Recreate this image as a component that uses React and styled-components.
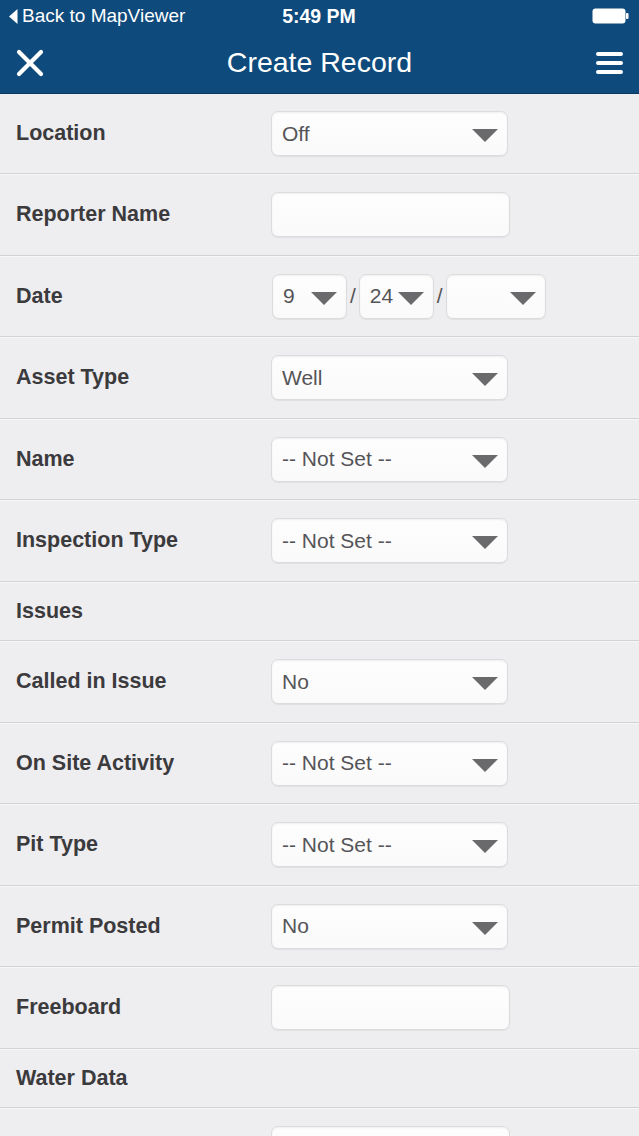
import styled, { createGlobalStyle } from 'styled-components'

const GlobalStyle = createGlobalStyle`
  html, body {
    margin: 0;
    padding: 0;
    background: #eeedef;
    font-family: "Liberation Sans", Arial, sans-serif;
  }
`

const Screen = styled.div`
  width: 639px;
  height: 1136px;
  overflow: hidden;
  background: #eeedef;
`

const Header = styled.header`
  background: #0e4a7b;
  color: #fff;
  height: 93px;
  border-bottom: 1px solid #0a3a62;
`

const StatusBar = styled.div`
  height: 32px;
  display: grid;
  grid-template-columns: 1fr auto 1fr;
  align-items: center;
  padding: 0 10px 0 9px;
  font-size: 19px;

  .back{
    display: flex;
    align-items: center;
    gap: 4px;
  }

  .time{
    font-weight: 700;
    font-size: 19.5px;
  }

  .battery{
    justify-self: end;
    display: flex;
    align-items: center;
  }
`

const NavBar = styled.div`
  height: 61px;
  display: grid;
  grid-template-columns: 1fr auto 1fr;
  align-items: center;
  padding: 0 16px 0 16px;

  .title{
    font-size: 28.5px;
    font-weight: 400;
  }

  .right{
    justify-self: end;
    display: flex;
  }
`

const Row = styled.div`
  height: ${props => props.$section ? '57.5px' : '79.5px'};
  display: flex;
  align-items: center;
  padding-left: 16px;
  border-bottom: 1px solid #d2d1d4;
  border-top: 1px solid #f7f7f8;

  &:first-of-type{
    height: 79px;
    border-top: none;
  }
`

const Label = styled.div`
  width: 255px;
  font-size: 21.5px;
  font-weight: 700;
  color: #3b3a3d;
`

const Box = styled.div`
  box-sizing: border-box;
  width: ${props => props.$width}px;
  height: 45px;
  background: linear-gradient(#fdfdfd, #fafafa);
  border: 1px solid #dcdbdd;
  border-radius: 7px;
  box-shadow: 0 1px 1px rgba(0, 0, 0, 0.06), inset 0 1px 2px rgba(0, 0, 0, 0.06);
  display: flex;
  align-items: center;
  justify-content: space-between;
  padding: 0 9px 0 10px;
  font-size: 21px;
  color: #555458;
`

const Arrow = styled.span`
  width: 0;
  height: 0;
  border-left: 13px solid transparent;
  border-right: 13px solid transparent;
  border-top: 13px solid #6a6a6c;
  margin-top: 4px;
`

const DateGroup = styled.div`
  display: flex;
  align-items: center;
  gap: 3px;
  margin-left: 1px;

  .sep{
    font-size: 21px;
    color: #555458;
  }
`

function Select({ value, width = 237 }) {
  return (
    <Box $width={width}>
      <span>{value}</span>
      <Arrow />
    </Box>
  )
}

const fields = [
  { label: 'Location', type: 'select', value: 'Off' },
  { label: 'Reporter Name', type: 'input' },
  { label: 'Date', type: 'date' },
  { label: 'Asset Type', type: 'select', value: 'Well' },
  { label: 'Name', type: 'select', value: '-- Not Set --' },
  { label: 'Inspection Type', type: 'select', value: '-- Not Set --' },
  { label: 'Issues', type: 'section' },
  { label: 'Called in Issue', type: 'select', value: 'No' },
  { label: 'On Site Activity', type: 'select', value: '-- Not Set --' },
  { label: 'Pit Type', type: 'select', value: '-- Not Set --' },
  { label: 'Permit Posted', type: 'select', value: 'No' },
  { label: 'Freeboard', type: 'input' },
  { label: 'Water Data', type: 'section' },
  { label: '', type: 'input' },
]

function Control({ field }) {
  if (field.type === 'select') return <Select value={field.value} />
  if (field.type === 'input') return <Box $width={239} />
  if (field.type === 'date') {
    return (
      <DateGroup>
        <Select value="9" width={75} />
        <span className="sep">/</span>
        <Select value="24" width={75} />
        <span className="sep">/</span>
        <Select value="" width={100} />
      </DateGroup>
    )
  }
  return null
}

export default function App() {
  return (
    <Screen>
      <GlobalStyle />
      <Header>
        <StatusBar>
          <div className="back">
            <svg width="9" height="15" viewBox="0 0 9 15"><path d="M8.5 0 L0 7.5 L8.5 15 Z" fill="#fff" /></svg>
            <span>Back to MapViewer</span>
          </div>
          <div className="time">5:49 PM</div>
          <div className="battery">
            <svg width="37" height="16" viewBox="0 0 37 16">
              <rect x="0.5" y="0.5" width="33" height="15" rx="3" fill="#fff" />
              <rect x="34" y="5" width="2.5" height="6" rx="1" fill="#fff" />
            </svg>
          </div>
        </StatusBar>
        <NavBar>
          <svg width="28" height="28" viewBox="0 0 28 28">
            <path d="M3 3 L25 25 M25 3 L3 25" stroke="#fff" strokeWidth="4.2" strokeLinecap="round" />
          </svg>
          <div className="title">Create Record</div>
          <div className="right">
            <svg width="27" height="24" viewBox="0 0 27 24">
              <path d="M2 3 H25 M2 12 H25 M2 21 H25" stroke="#fff" strokeWidth="4" strokeLinecap="round" />
            </svg>
          </div>
        </NavBar>
      </Header>
      {fields.map((field, index) => (
        <Row key={index} $section={field.type === 'section'}>
          <Label>{field.label}</Label>
          <Control field={field} />
        </Row>
      ))}
    </Screen>
  )
}
